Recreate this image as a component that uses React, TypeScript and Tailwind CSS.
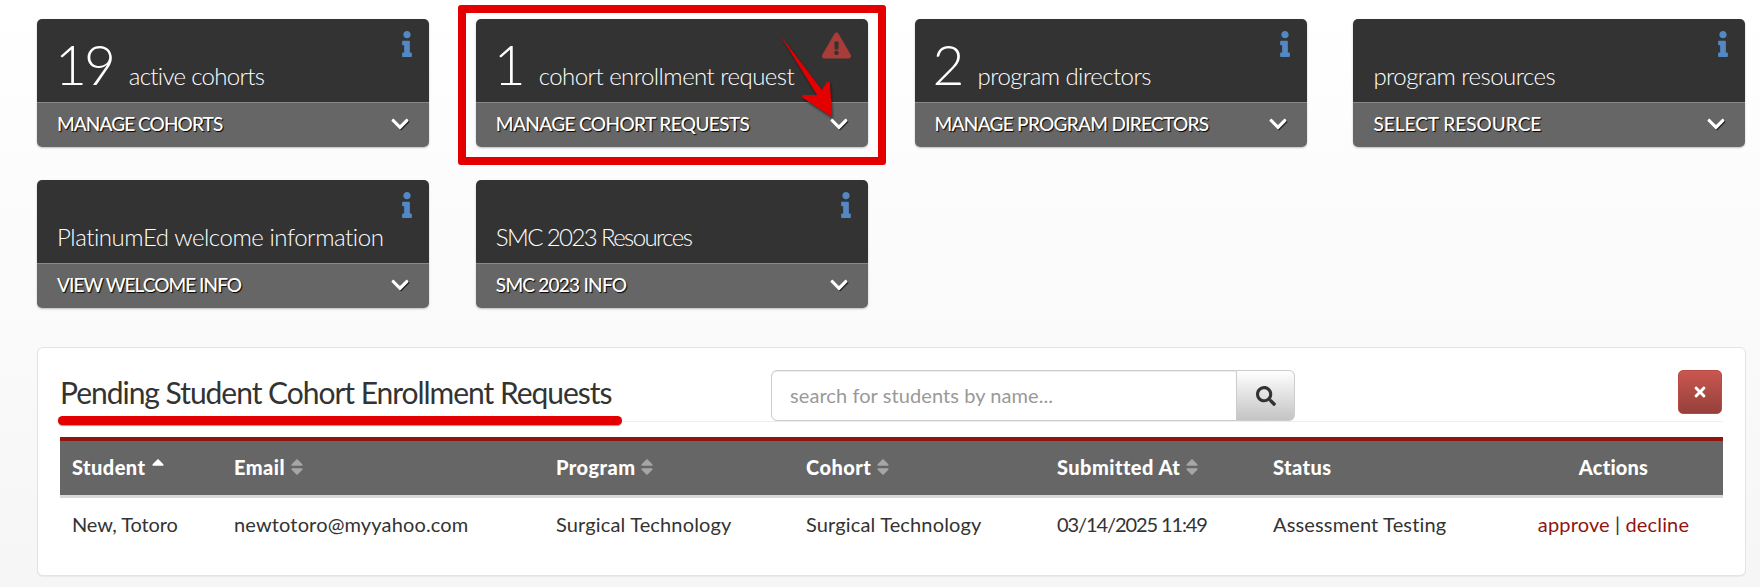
import React from "react";
import { FaInfo, FaExclamationTriangle, FaChevronDown, FaSearch, FaTimes, FaSort, FaSortUp } from "react-icons/fa";

type CardProps = { num?: string; label: string; action: string; warn?: boolean; labelClass?: string; actionClass: string };

function Card({ num, label, action, warn, labelClass = "tracking-[-0.55px]", actionClass }: CardProps) {
  return (
    <div className="w-[392px] h-[128px] rounded-[5px] overflow-hidden flex flex-col shadow-[0_1px_2px_rgba(0,0,0,0.25)]">
      <div className="relative h-[83px] bg-[#333333] flex items-end pl-[20px] pb-[10px] text-white">
        <div className="flex items-baseline">
          {num && <span className="font-light text-[55px] leading-[55px] tracking-[-3px] -ml-[2px] mr-[16px]">{num}</span>}
          <span className={`font-light text-[24px] leading-[32px] text-white ${labelClass}`}>{label}</span>
        </div>
        {warn ? (
          <FaExclamationTriangle className="absolute right-[17px] top-[12px] text-[#a83c38] text-[29px]" />
        ) : (
          <FaInfo className="absolute right-[9px] top-[12px] text-[#5388c4] text-[26px]" />
        )}
      </div>
      <div className="h-[45px] bg-[#666666] border-t border-[#888888] flex items-center justify-between pl-[20px] pr-[19px] pb-[2px] text-white">
        <span className={`text-[19px] font-medium [text-shadow:1px_1px_1px_#000] ${actionClass}`}>{action}</span>
        <FaChevronDown className="text-[20px] drop-shadow-[1px_1px_0_#222]" />
      </div>
    </div>
  );
}

function Th({ children, sort, className = "" }: { children: React.ReactNode; sort?: "up" | "both"; className?: string }) {
  return (
    <th className={`h-[61px] px-[12px] pb-[2px] bg-[#666666] border-t-[4px] border-t-[#8f1610] border-b-[3px] border-b-[#d9d9d9] font-black text-[20px] text-left text-white tracking-[0.45px] ${className}`}>
      <span className="inline-flex items-center gap-[2px]">
        {children}
        {sort === "up" && <FaSortUp className="text-[20px]" />}
        {sort === "both" && <FaSort className="text-[20px] text-[#a6a6a6]" />}
      </span>
    </th>
  );
}

export default function App() {
  return (
    <div className="relative w-[1760px] h-[587px] overflow-hidden bg-gradient-to-b from-[#ffffff] to-[#f6f6f6] font-['Lato','Noto_Sans',sans-serif] text-[#333333]">
      <div className="pt-[19px] pl-[37px] pr-[15px]">
        <div className="grid grid-cols-[392px_392px_392px_392px] gap-x-[46.8px] gap-y-[33px]">
          <Card num="19" label="active cohorts" action="MANAGE COHORTS" labelClass="tracking-[-0.7px]" actionClass="tracking-[-0.9px]" />
          <Card num="1" label="cohort enrollment request" action="MANAGE COHORT REQUESTS" warn actionClass="tracking-[-0.6px]" />
          <Card num="2" label="program directors" action="MANAGE PROGRAM DIRECTORS" actionClass="tracking-[-0.7px]" />
          <Card label="program resources" action="SELECT RESOURCE" actionClass="tracking-[0px]" />
          <Card label="PlatinumEd welcome information" action="VIEW WELCOME INFO" labelClass="tracking-[-0.45px]" actionClass="tracking-[-0.95px]" />
          <Card label="SMC 2023 Resources" action="SMC 2023 INFO" labelClass="tracking-[-1.6px]" actionClass="tracking-[-0.75px]" />
        </div>

        <div className="mt-[39px] w-[1709px] h-[229px] bg-white border border-[#e3e3e3] rounded-[6px] shadow-[0_1px_1px_rgba(0,0,0,0.05)] pt-[22px] px-[22px]">
          <div className="flex h-[52px] border-b border-[#eeeeee] w-[1663px]">
            <h2 className="w-[711px] text-[30px] leading-[44px] font-normal text-[#333333] tracking-[-1.03px] whitespace-nowrap">
              Pending Student Cohort Enrollment Requests
            </h2>
            <div className="flex h-[51px] w-[524px]">
              <div className="w-[466px] h-full border border-[#cccccc] rounded-l-[6px] bg-white flex items-center pl-[18px] pb-[2px] text-[20px] tracking-[0.08px] text-[#999999] shadow-[inset_0_1px_1px_rgba(0,0,0,0.075)]">
                search for students by name...
              </div>
              <div className="w-[58px] h-full border border-l-0 border-[#cccccc] rounded-r-[6px] bg-gradient-to-b from-white to-[#c4c4c4] flex items-center justify-center">
                <FaSearch className="text-[20px] text-[#333333]" />
              </div>
            </div>
            <div className="ml-auto mr-[1px] w-[44px] h-[44px] rounded-[5px] bg-gradient-to-b from-[#c9574f] to-[#96403c] border border-[#bb4a44] flex items-center justify-center">
              <FaTimes className="text-white text-[16px]" />
            </div>
          </div>
          <table className="mt-[15px] w-[1663px] table-fixed border-separate border-spacing-0">
            <thead>
              <tr>
                <Th sort="up" className="w-[162px]">Student</Th>
                <Th sort="both" className="w-[322px]">Email</Th>
                <Th sort="both" className="w-[250px]">Program</Th>
                <Th sort="both" className="w-[251px]">Cohort</Th>
                <Th sort="both" className="w-[216px]">Submitted At</Th>
                <Th className="w-[243px]">Status</Th>
                <th className="h-[61px] px-[12px] pb-[2px] bg-[#666666] border-t-[4px] border-t-[#8f1610] border-b-[3px] border-b-[#d9d9d9] font-black text-[20px] text-center text-white tracking-[0.2px]">Actions</th>
              </tr>
            </thead>
            <tbody>
              <tr className="h-[52px] text-[20px] text-[#333333] tracking-[0.15px]">
                <td className="px-[12px] tracking-[-0.1px]">New, Totoro</td>
                <td className="px-[12px]">newtotoro@myyahoo.com</td>
                <td className="px-[12px]">Surgical Technology</td>
                <td className="px-[12px]">Surgical Technology</td>
                <td className="px-[12px] tracking-[-1.1px]">03/14/2025 11:49</td>
                <td className="px-[12px]">Assessment Testing</td>
                <td className="px-[12px] text-center whitespace-nowrap">
                  <a className="text-[#8f1610]">approve</a> | <a className="text-[#8f1610]">decline</a>
                </td>
              </tr>
            </tbody>
          </table>
        </div>
      </div>

      {/* Annotations drawn over the page */}
      <div className="absolute left-[458px] top-[5px] w-[428px] h-[160px] border-[8px] border-[#e40000] rounded-[3px]" />
      <div className="absolute left-[58px] top-[416px] w-[564px] h-[9px] rounded-full bg-[#e40000] shadow-[0_1px_1px_rgba(0,0,0,0.4)]" />
      <svg className="absolute left-[770px] top-[25px] drop-shadow-[1px_2px_1px_rgba(0,0,0,0.5)]" width="80" height="110" viewBox="0 0 80 110">
        <path d="M10 10 L52 65 L57 57 Q60 56 60 59 L62 92 L33 73 Q31 71 33 70 L47 70 Z" fill="#e40000" />
      </svg>
    </div>
  );
}
